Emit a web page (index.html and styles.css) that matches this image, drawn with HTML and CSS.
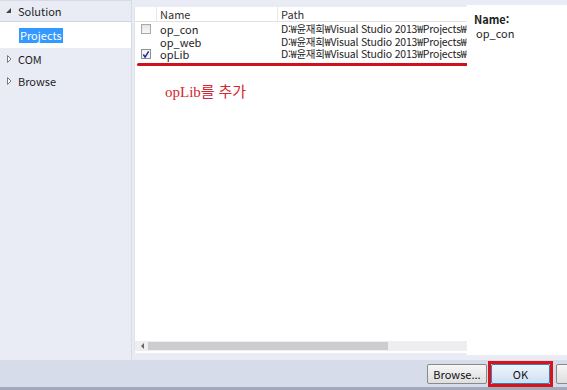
FILE: index.html
```html
<!DOCTYPE html>
<html lang="ko">
<head>
<meta charset="utf-8">
<link rel="stylesheet" href="styles.css">
</head>
<body>
<div class="app">
  <div class="main">
    <div class="sidebar">
      <div class="node node-top"><span class="tri tri-open"></span>Solution</div>
      <div class="node node-sel"><span class="sel">Projects</span></div>
      <div class="node node-c"><svg class="tri-c" width="12" height="8" viewBox="0 0 12 8"><path d="M1.5 0.5 L5 4 L1.5 7.5 Z" fill="#fff" stroke="#7a7a7a" stroke-width="1"/></svg>COM</div>
      <div class="node node-c"><svg class="tri-c" width="12" height="8" viewBox="0 0 12 8"><path d="M1.5 0.5 L5 4 L1.5 7.5 Z" fill="#fff" stroke="#7a7a7a" stroke-width="1"/></svg>Browse</div>
    </div>
    <div class="center">
      <div class="list">
        <div class="hdr">
          <div class="c-chk"></div>
          <div class="c-name">Name</div>
          <div class="c-path">Path</div>
        </div>
        <div class="row">
          <div class="c-chk"><span class="box"></span></div>
          <div class="c-name">op_con</div>
          <div class="c-path">D:₩윤재희₩Visual Studio 2013₩Projects₩op_con</div>
        </div>
        <div class="row">
          <div class="c-chk"></div>
          <div class="c-name">op_web</div>
          <div class="c-path">D:₩윤재희₩Visual Studio 2013₩Projects₩op_web</div>
        </div>
        <div class="row">
          <div class="c-chk"><span class="box checked"><svg width="9" height="9" viewBox="0 0 9 9"><path d="M1.5 4.5 L3.5 7.5 L7.5 1" fill="none" stroke="#1a2a9a" stroke-width="1.6"/></svg></span></div>
          <div class="c-name">opLib</div>
          <div class="c-path">D:₩윤재희₩Visual Studio 2013₩Projects₩opLib</div>
        </div>
        <div class="redline"></div>
        <div class="note">opLib를 추가</div>
        <div class="fill"></div>
        <div class="hscroll">
          <span class="arr arr-l"></span>
          <span class="thumb"></span>
          <span class="arr arr-r"></span>
        </div>
      </div>
    </div>
    <div class="details">
      <div class="lbl">Name:</div>
      <div class="val">op_con</div>
    </div>
  </div>
  <div class="footer">
    <button class="btn">Browse...</button>
    <div class="ok-wrap"><button class="btn btn-ok">OK</button></div>
    <button class="btn btn-cut">Cancel</button>
  </div>
</div>
</body>
</html>
```

FILE: styles.css
```css
* { box-sizing: border-box; }
html, body { margin: 0; padding: 0; }
body {
  width: 567px;
  height: 390px;
  overflow: hidden;
  background: #e9ecf5;
  font-family: "Noto Sans CJK KR", "Noto Sans", sans-serif;
  font-size: 11px;
  color: #1e1e1e;
}
.app { display: flex; flex-direction: column; height: 390px; }
.main { display: flex; height: 360px; }

.sidebar {
  width: 132px;
  background: #e9ecf5;
  border-right: 1px solid #d7dbe6;
  display: flex;
  flex-direction: column;
}
.node { display: flex; align-items: center; padding-left: 6px; }
.node-top {
  height: 22px;
  border-bottom: 1px solid #cfd4e0;
  border-top: 1px solid #d7dbe6;
}
.node-sel {
  height: 26px;
  background: #ffffff;
  padding-left: 19px;
}
.sel {
  background: #3399ff;
  color: #ffffff;
  padding: 0 1px;
  line-height: 15px;
}
.node-c { height: 22px; }
.tri { display: inline-block; width: 12px; height: 8px; position: relative; }
.tri-open::before {
  content: ""; position: absolute; left: 0; top: 1px;
  border-left: 5px solid transparent;
  border-bottom: 5px solid #444;
}
.tri-c { flex: none; }

.center {
  width: 335px;
  padding: 7px 0 7px 2px;
  display: flex;
}
.list {
  flex: 1;
  background: #ffffff;
  display: flex;
  flex-direction: column;
  border-left: 1px solid #dfe2ea;
}
.hdr {
  display: flex;
  height: 15px;
  align-items: center;
  border-bottom: 1px solid #e2e2e2;
  color: #333;
}
.hdr .c-name, .hdr .c-chk { border-right: 1px solid #e8e8e8; height: 100%; display: flex; align-items: center; }
.c-chk { width: 22px; flex: none; display: flex; justify-content: center; align-items: center; }
.c-name { width: 121px; flex: none; padding-left: 3px; }
.c-path { flex: 1; padding-left: 3px; white-space: nowrap; overflow: hidden; }
.row .c-path { font-size: 10.5px; letter-spacing: -0.2px; }
.row { display: flex; height: 12.5px; align-items: center; line-height: 12px; }
.row:nth-child(2) { margin-top: 1px; }
.box {
  width: 10px; height: 10px;
  border: 1px solid #a8a8a8;
  background: linear-gradient(#e4e4e4, #f8f8f8);
  display: flex; align-items: center; justify-content: center;
}
.box.checked { background: #f4f4f4; border-color: #8e8f8f; }
.redline {
  height: 3px;
  background: #d0101c;
  border-radius: 2px;
  margin: 2px 0 0 2px;
}
.note {
  margin: 14px 0 0 30px;
  font-family: "Liberation Serif", "Noto Sans CJK KR", serif;
  font-size: 15px;
  color: #d22631;
}
.fill { flex: 1; }
.hscroll {
  height: 10px;
  display: flex;
  align-items: center;
  background: #eeeef0;
  margin-bottom: 2px;
  padding: 0 4px;
}
.arr { width: 0; height: 0; border-top: 3px solid transparent; border-bottom: 3px solid transparent; }
.arr-l { border-right: 3px solid #666; margin-left: 2px; }
.arr-r { border-left: 3px solid #888; margin-left: auto; margin-right: 2px; }
.thumb { width: 240px; height: 8px; background: #cdcdd0; margin-left: 4px; }

.details {
  flex: 1;
  background: #ffffff;
  margin-top: 5px;
  margin-bottom: 5px;
  padding: 7px 0 0 7px;
}
.lbl { font-weight: bold; color: #222; line-height: 14px; }
.val { padding-left: 2px; line-height: 14px; }

.footer {
  height: 30px;
  background: #d7dcea;
  border-bottom: 3px solid #a2aabe;
  display: flex;
  align-items: center;
  justify-content: flex-end;
  padding-top: 1px;
}
.btn {
  font-family: "Noto Sans CJK KR", "Noto Sans", sans-serif;
  font-size: 11px;
  color: #111;
  height: 20px;
  border: 1px solid #8a8a8a;
  border-radius: 2px;
  background: linear-gradient(#f6f6f6, #dedede);
  padding: 0;
}
.footer > .btn:first-child { width: 60px; margin-right: 1px; }
.ok-wrap {
  border: 3px solid #d7141e;
  padding: 0;
  width: 65px;
  height: 26px;
  display: flex;
  margin-right: 3px;
}
.btn-ok { flex: 1; height: 100%; background: linear-gradient(#eef4fb, #cfe0f2); border-color: #3c7fb1; }
.btn-cut { width: 30px; flex: none; margin-right: -19px; text-indent: 40px; overflow: hidden; }
```
